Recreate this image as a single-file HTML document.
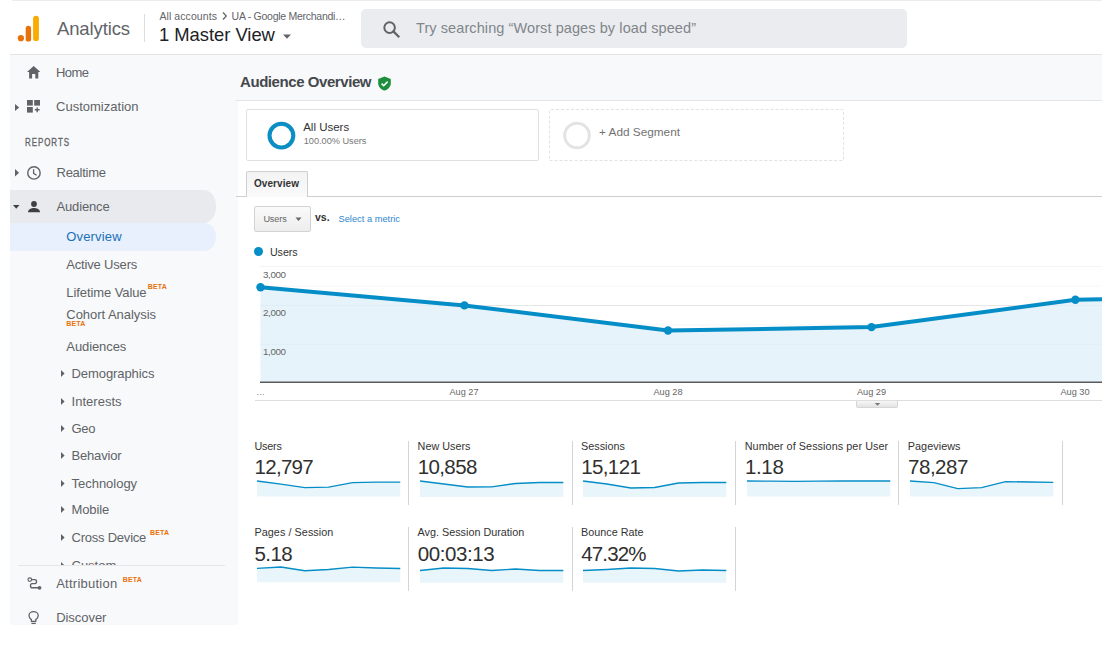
<!DOCTYPE html>
<html><head><meta charset="utf-8"><style>
html,body{margin:0;padding:0;width:1114px;height:650px;overflow:hidden;background:#fff;}
body{position:relative;font-family:"Liberation Sans",sans-serif;}
.r{position:absolute;box-sizing:border-box;}
.t{position:absolute;white-space:nowrap;line-height:1;font-family:"Liberation Sans",sans-serif;}
svg.r{overflow:visible;}
</style></head><body>
<div class="r" style="left:12px;top:0;width:1090px;height:1px;background:#ececec"></div>
<svg class="r" style="left:0;top:0" width="60" height="54" viewBox="0 0 60 54"><circle cx="20.9" cy="38.2" r="3.1" fill="#e8710a"/><rect x="25.7" y="25.8" width="5.4" height="15.8" rx="2.7" fill="#e8710a"/><rect x="33.1" y="15.8" width="5.8" height="25.3" rx="2.9" fill="#f9ab00"/></svg>
<div class="t" style="left:57.00px;top:20.00px;font-size:18.5px;color:#5f6368;letter-spacing:-0.127px;">Analytics</div>
<div class="r" style="left:144px;top:14px;width:1px;height:28px;background:#dadce0"></div>
<div class="t" style="left:159.40px;top:11.00px;font-size:10.5px;color:#5f6368;letter-spacing:0.089px;">All accounts</div>
<svg class="r" style="left:220px;top:10px" width="10" height="12" viewBox="0 0 10 12"><path d="M3 2.5 L6.3 6 L3 9.5" fill="none" stroke="#5f6368" stroke-width="1.2"/></svg>
<div class="t" style="left:231.60px;top:11.00px;font-size:10.5px;color:#5f6368;letter-spacing:-0.268px;">UA - Google Merchandi…</div>
<div class="t" style="left:159.00px;top:26.00px;font-size:18.4px;color:#202124;letter-spacing:-0.024px;">1 Master View</div>
<svg class="r" style="left:281px;top:33px" width="12" height="8" viewBox="0 0 12 8"><path d="M2 1.5 L10 1.5 L6 5.8 Z" fill="#5f6368"/></svg>
<div class="r" style="left:361px;top:9px;width:546px;height:39px;background:#ebecef;border-radius:5px"></div>
<svg class="r" style="left:380px;top:18px" width="22" height="22" viewBox="0 0 22 22"><circle cx="9.6" cy="9.6" r="5.3" fill="none" stroke="#5f6368" stroke-width="2"/><path d="M13.4 13.4 L18.5 18.5" stroke="#5f6368" stroke-width="2.2" stroke-linecap="square"/></svg>
<div class="t" style="left:416.00px;top:21.00px;font-size:14.5px;color:#80868b;letter-spacing:0.089px;">Try searching “Worst pages by load speed”</div>
<div class="r" style="left:10px;top:54px;width:1092px;height:1px;background:#e3e3e3"></div>
<div class="r" style="left:10px;top:55px;width:228px;height:570px;background:#f8f9fa;overflow:hidden">
<div class="r" style="left:0;top:135px;width:206px;height:33px;background:#e8eaed;border-radius:0 12px 12px 0 / 0 16px 16px 0"></div><div class="r" style="left:0;top:168px;width:206.3px;height:28px;background:#e7f0fc;border-radius:0 12px 12px 0 / 0 14px 14px 0"></div><div class="t" style="left:46.00px;top:11.00px;font-size:13px;color:#5f6368;letter-spacing:-0.561px;">Home</div><div class="t" style="left:46.00px;top:45.00px;font-size:13px;color:#5f6368;letter-spacing:0.011px;">Customization</div><div class="t" style="left:15.40px;top:83.00px;font-size:10px;color:#5f6368;letter-spacing:1.200px;-webkit-text-stroke:0.3px #5f6368;transform:scaleX(0.7948);transform-origin:0 0;">REPORTS</div><div class="t" style="left:46.50px;top:111.00px;font-size:13px;color:#5f6368;letter-spacing:-0.257px;">Realtime</div><div class="t" style="left:46.50px;top:145.00px;font-size:13px;color:#5f6368;letter-spacing:-0.144px;">Audience</div><div class="t" style="left:56.30px;top:175.00px;font-size:13px;color:#1a6fb8;letter-spacing:0.156px;">Overview</div><div class="t" style="left:56.30px;top:203.00px;font-size:13px;color:#5f6368;letter-spacing:-0.178px;">Active Users</div><div class="t" style="left:56.30px;top:231.00px;font-size:13px;color:#5f6368;letter-spacing:-0.086px;">Lifetime Value</div><div class="t" style="left:137.70px;top:228.00px;font-size:7px;color:#e8710a;font-weight:bold;letter-spacing:0.155px;">BETA</div><div class="t" style="left:56.30px;top:253.00px;font-size:13px;color:#5f6368;letter-spacing:-0.045px;">Cohort Analysis</div><div class="t" style="left:56.30px;top:265.00px;font-size:7px;color:#e8710a;font-weight:bold;letter-spacing:0.155px;">BETA</div><div class="t" style="left:56.30px;top:285.00px;font-size:13px;color:#5f6368;letter-spacing:-0.089px;">Audiences</div><div class="t" style="left:61.50px;top:312.00px;font-size:13px;color:#5f6368;letter-spacing:-0.074px;">Demographics</div><svg class="r" style="left:51px;top:315.0px" width="4" height="7" viewBox="0 0 4 7"><path d="M0 0 L3.6 3.5 L0 7 Z" fill="#5f6368"/></svg><div class="t" style="left:61.50px;top:340.00px;font-size:13px;color:#5f6368;letter-spacing:0.031px;">Interests</div><svg class="r" style="left:51px;top:342.9px" width="4" height="7" viewBox="0 0 4 7"><path d="M0 0 L3.6 3.5 L0 7 Z" fill="#5f6368"/></svg><div class="t" style="left:61.50px;top:367.00px;font-size:13px;color:#5f6368;letter-spacing:-0.285px;">Geo</div><svg class="r" style="left:51px;top:370.3px" width="4" height="7" viewBox="0 0 4 7"><path d="M0 0 L3.6 3.5 L0 7 Z" fill="#5f6368"/></svg><div class="t" style="left:61.50px;top:394.00px;font-size:13px;color:#5f6368;letter-spacing:-0.173px;">Behavior</div><svg class="r" style="left:51px;top:397.1px" width="4" height="7" viewBox="0 0 4 7"><path d="M0 0 L3.6 3.5 L0 7 Z" fill="#5f6368"/></svg><div class="t" style="left:61.50px;top:422.00px;font-size:13px;color:#5f6368;letter-spacing:-0.019px;">Technology</div><svg class="r" style="left:51px;top:425.0px" width="4" height="7" viewBox="0 0 4 7"><path d="M0 0 L3.6 3.5 L0 7 Z" fill="#5f6368"/></svg><div class="t" style="left:61.50px;top:448.00px;font-size:13px;color:#5f6368;letter-spacing:-0.100px;">Mobile</div><svg class="r" style="left:51px;top:451.4px" width="4" height="7" viewBox="0 0 4 7"><path d="M0 0 L3.6 3.5 L0 7 Z" fill="#5f6368"/></svg><div class="t" style="left:61.50px;top:476.00px;font-size:13px;color:#5f6368;letter-spacing:-0.227px;">Cross Device</div><svg class="r" style="left:51px;top:479.3px" width="4" height="7" viewBox="0 0 4 7"><path d="M0 0 L3.6 3.5 L0 7 Z" fill="#5f6368"/></svg><div class="t" style="left:61.50px;top:504.00px;font-size:13px;color:#5f6368;">Custom</div><svg class="r" style="left:51px;top:506.9px" width="4" height="7" viewBox="0 0 4 7"><path d="M0 0 L3.6 3.5 L0 7 Z" fill="#5f6368"/></svg><div class="t" style="left:140.00px;top:474.00px;font-size:7px;color:#e8710a;font-weight:bold;letter-spacing:0.155px;">BETA</div><div class="r" style="left:0;top:511px;width:228px;height:59px;background:#f8f9fa"></div><div class="r" style="left:8px;top:510px;width:207px;height:1px;background:#e6e6e6"></div><div class="t" style="left:46.20px;top:522.00px;font-size:13px;color:#5f6368;letter-spacing:0.247px;">Attribution</div><div class="t" style="left:112.70px;top:521.00px;font-size:7px;color:#e8710a;font-weight:bold;letter-spacing:0.155px;">BETA</div><div class="t" style="left:46.20px;top:556.00px;font-size:13px;color:#5f6368;letter-spacing:-0.053px;">Discover</div><svg class="r" style="left:5px;top:48.5px" width="5" height="8" viewBox="0 0 5 8"><path d="M0 0 L4.2 3.5 L0 7 Z" fill="#5f6368"/></svg><svg class="r" style="left:4.7px;top:114px" width="5" height="8" viewBox="0 0 5 8"><path d="M0 0 L4 3.8 L0 7.6 Z" fill="#5f6368"/></svg><svg class="r" style="left:3.2px;top:150px" width="7" height="5" viewBox="0 0 7 5"><path d="M0 0 L6.5 0 L3.25 3.8 Z" fill="#3c4043"/></svg><svg class="r" style="left:17px;top:10.8px" width="14" height="13" viewBox="0 0 14 13"><path d="M6.7 0 L13.4 6 L11.3 6 L11.3 12.4 L8.3 12.4 L8.3 8 L5.1 8 L5.1 12.4 L2.1 12.4 L2.1 6 L0 6 Z" fill="#5f6368"/></svg><svg class="r" style="left:17px;top:45px" width="14" height="13" viewBox="0 0 14 13"><rect x="0" y="0" width="5.8" height="5.6" fill="#5f6368"/><rect x="7.2" y="0" width="5.8" height="5.6" fill="#5f6368"/><rect x="0" y="7" width="5.8" height="5.6" fill="#5f6368"/><path d="M7.8 9.8 H12.6 M10.2 7.4 V12.2" stroke="#5f6368" stroke-width="1.4"/></svg><svg class="r" style="left:16.6px;top:110.7px" width="14" height="14" viewBox="0 0 14 14"><circle cx="6.95" cy="6.95" r="6.2" fill="none" stroke="#5f6368" stroke-width="1.4"/><path d="M6.6 3.3 V7.3 L9.6 9.2" fill="none" stroke="#5f6368" stroke-width="1.3"/></svg><svg class="r" style="left:17.8px;top:146.4px" width="12" height="12" viewBox="0 0 12 12"><circle cx="6" cy="3" r="2.9" fill="#3c4043"/><path d="M0 11.3 C0 8 3.5 7 6 7 C8.5 7 12 8 12 11.3 Z" fill="#3c4043"/></svg><svg class="r" style="left:16.5px;top:522px" width="16" height="14" viewBox="0 0 16 14"><circle cx="2.8" cy="2.6" r="1.8" fill="none" stroke="#5f6368" stroke-width="1.2"/><path d="M4.6 2.6 H8 C10 2.6 10 6.6 8 6.6 H5 C3 6.6 3 10.8 5 10.8 H11" fill="none" stroke="#5f6368" stroke-width="1.4"/><circle cx="12.5" cy="10.8" r="1.9" fill="#5f6368"/></svg><svg class="r" style="left:17.5px;top:555.5px" width="12" height="14" viewBox="0 0 12 14"><path d="M3.4 8.6 C1.9 7.6 1 6 1 4.5 C1 2.4 3 0.7 5.6 0.7 C8.2 0.7 10.2 2.4 10.2 4.5 C10.2 6 9.3 7.6 7.8 8.6 V10.4 H3.4 Z" fill="none" stroke="#5f6368" stroke-width="1.3"/><path d="M3.4 12.4 H7.8" stroke="#5f6368" stroke-width="1.3"/></svg>
</div>
<div class="r" style="left:238px;top:55px;width:864px;height:45px;background:#f8f9fa"></div>
<div class="r" style="left:236px;top:100px;width:866px;height:1px;background:#e3e3e3"></div>
<div class="t" style="left:240.00px;top:74.00px;font-size:15px;color:#44484c;font-weight:bold;letter-spacing:-0.432px;">Audience Overview</div>
<svg class="r" style="left:378px;top:75.5px" width="14" height="15" viewBox="0 0 14 15"><path d="M6.5 0.5 L12.8 3 V7 C12.8 10.8 10.2 13.6 6.5 14.6 C2.8 13.6 0.2 10.8 0.2 7 V3 Z" fill="#1e8e3e"/><path d="M3.6 7.6 L5.7 9.7 L9.6 5.6" fill="none" stroke="#fff" stroke-width="1.6"/></svg>
<div class="r" style="left:246px;top:109px;width:293px;height:52px;border:1px solid #e0e0e0;border-radius:2px;background:#fff"></div>
<svg class="r" style="left:266px;top:120px" width="31" height="31" viewBox="0 0 31 31"><circle cx="15.4" cy="15.6" r="11.9" fill="none" stroke="#0c8ec5" stroke-width="4.1"/></svg>
<div class="t" style="left:303.20px;top:122.00px;font-size:11.5px;color:#333333;letter-spacing:-0.001px;">All Users</div>
<div class="t" style="left:303.70px;top:137.00px;font-size:9.2px;color:#777777;letter-spacing:-0.008px;">100.00% Users</div>
<div class="r" style="left:549px;top:109px;width:295px;height:52px;border:1px dashed #e2e2e2;border-radius:2px"></div>
<svg class="r" style="left:562px;top:121px" width="30" height="30" viewBox="0 0 30 30"><circle cx="15" cy="14.5" r="12.3" fill="none" stroke="#e3e3e3" stroke-width="3"/></svg>
<div class="t" style="left:599.00px;top:127.00px;font-size:11.8px;color:#727272;letter-spacing:-0.002px;">+ Add Segment</div>
<div class="r" style="left:236px;top:196px;width:866px;height:1px;background:#cfcfcf"></div>
<div class="r" style="left:246px;top:171px;width:62px;height:26px;border:1px solid #cfcfcf;border-bottom:none;border-radius:2px 2px 0 0;background:linear-gradient(#f3f3f3,#fafafa)"></div>
<div class="t" style="left:254.00px;top:179.00px;font-size:10px;color:#333333;font-weight:bold;letter-spacing:0.073px;">Overview</div>
<div class="r" style="left:254px;top:206px;width:56.5px;height:26px;border:1px solid #d3d3d3;border-radius:2px;background:linear-gradient(#fafafa,#ededed)"></div>
<div class="t" style="left:263.40px;top:215.00px;font-size:9.2px;color:#666666;letter-spacing:-0.155px;">Users</div>
<svg class="r" style="left:295px;top:217px" width="8" height="5" viewBox="0 0 8 5"><path d="M0.5 0.5 L6.5 0.5 L3.5 3.9 Z" fill="#666"/></svg>
<div class="t" style="left:315.00px;top:212.00px;font-size:10.5px;color:#333333;font-weight:bold;">vs.</div>
<div class="t" style="left:338.50px;top:215.00px;font-size:9.3px;color:#2f87cf;">Select a metric</div>
<div class="r" style="left:254.2px;top:247.3px;width:9px;height:9px;border-radius:50%;background:#058dc7"></div>
<div class="t" style="left:269.90px;top:247.00px;font-size:10.7px;color:#333333;letter-spacing:-0.034px;">Users</div>
<svg class="r" style="left:238px;top:255px" width="864" height="160" viewBox="0 0 864 160"><rect x="22" y="11.00" width="842" height="1" fill="#f4f4f4"/><rect x="22" y="30.50" width="842" height="1" fill="#f7f7f7"/><rect x="22" y="50.00" width="842" height="1" fill="#ececec"/><rect x="22" y="69.50" width="842" height="1" fill="#f5f5f5"/><rect x="22" y="88.80" width="842" height="1" fill="#ececec"/><rect x="22" y="108.00" width="842" height="1" fill="#f5f5f5"/><polygon points="22.50,32.30 226.40,50.40 430.00,75.50 633.50,72.10 837.40,44.70 864.00,44.30 864.00,127.00 22.50,127.00" fill="#e6f3fa"/><rect x="22" y="50.00" width="842" height="1" fill="#000" fill-opacity="0.022"/><rect x="22" y="88.80" width="842" height="1" fill="#000" fill-opacity="0.022"/><rect x="22" y="126.50" width="842" height="1.5" fill="#5a5a5a"/><polyline points="22.50,32.30 226.40,50.40 430.00,75.50 633.50,72.10 837.40,44.70 864.00,44.30" fill="none" stroke="#058dc7" stroke-width="4" stroke-linejoin="round"/><circle cx="22.50" cy="32.30" r="4.2" fill="#058dc7"/><circle cx="226.40" cy="50.40" r="4.2" fill="#058dc7"/><circle cx="430.00" cy="75.50" r="4.2" fill="#058dc7"/><circle cx="633.50" cy="72.10" r="4.2" fill="#058dc7"/><circle cx="837.40" cy="44.70" r="4.2" fill="#058dc7"/><rect x="17" y="145" width="847" height="1" fill="#dedede"/></svg>
<div class="t" style="left:263.00px;top:270.00px;font-size:9.8px;color:#666666;letter-spacing:-0.380px;">3,000</div>
<div class="t" style="left:263.00px;top:308.00px;font-size:9.8px;color:#666666;letter-spacing:-0.380px;">2,000</div>
<div class="t" style="left:263.00px;top:347.00px;font-size:9.8px;color:#666666;letter-spacing:-0.380px;">1,000</div>
<div class="t" style="left:256.50px;top:388.00px;font-size:9.2px;color:#888888;letter-spacing:0.168px;">...</div>
<div class="t" style="left:449.40px;top:388.00px;font-size:9.2px;color:#666666;letter-spacing:0.009px;">Aug 27</div>
<div class="t" style="left:653.40px;top:388.00px;font-size:9.2px;color:#666666;letter-spacing:0.009px;">Aug 28</div>
<div class="t" style="left:856.90px;top:388.00px;font-size:9.2px;color:#666666;letter-spacing:0.009px;">Aug 29</div>
<div class="t" style="left:1060.40px;top:388.00px;font-size:9.2px;color:#666666;letter-spacing:0.009px;">Aug 30</div>
<div class="r" style="left:856px;top:400.5px;width:42px;height:7px;border:1px solid #d6d6d6;border-top:none;border-radius:0 0 2px 2px;background:linear-gradient(#f6f6f6,#e3e3e3)"></div>
<svg class="r" style="left:874px;top:402.5px" width="8" height="4" viewBox="0 0 8 4"><path d="M0.8 0 L6.2 0 L3.5 2.8 Z" fill="#777"/></svg>
<div class="t" style="left:254.40px;top:441.00px;font-size:10.8px;color:#333333;letter-spacing:-0.200px;">Users</div>
<div class="t" style="left:254.60px;top:457.00px;font-size:20.5px;color:#303030;letter-spacing:-0.722px;">12,797</div>
<svg class="r" style="left:256.60px;top:479.40px" width="143.30" height="17.60" viewBox="0 0 143.30 17.60"><polygon points="0.00,2.00 23.88,5.10 47.77,8.60 71.65,8.10 95.53,3.60 119.42,3.10 143.30,3.10 143.30,17.60 0,17.60" fill="#058dc7" fill-opacity="0.09"/><polyline points="0.00,2.00 23.88,5.10 47.77,8.60 71.65,8.10 95.53,3.60 119.42,3.10 143.30,3.10" fill="none" stroke="#058dc7" stroke-width="1.35"/></svg>
<div class="t" style="left:417.60px;top:441.00px;font-size:10.8px;color:#333333;">New Users</div>
<div class="t" style="left:417.80px;top:457.00px;font-size:20.5px;color:#303030;letter-spacing:-0.642px;">10,858</div>
<svg class="r" style="left:419.80px;top:479.00px" width="143.30" height="18.00" viewBox="0 0 143.30 18.00"><polygon points="0.00,2.00 23.88,5.00 47.77,8.00 71.65,7.80 95.53,4.50 119.42,3.50 143.30,3.50 143.30,18.00 0,18.00" fill="#058dc7" fill-opacity="0.09"/><polyline points="0.00,2.00 23.88,5.00 47.77,8.00 71.65,7.80 95.53,4.50 119.42,3.50 143.30,3.50" fill="none" stroke="#058dc7" stroke-width="1.35"/></svg>
<div class="t" style="left:581.10px;top:441.00px;font-size:10.8px;color:#333333;">Sessions</div>
<div class="t" style="left:581.30px;top:457.00px;font-size:20.5px;color:#303030;letter-spacing:-0.642px;">15,121</div>
<svg class="r" style="left:583.30px;top:479.00px" width="143.30" height="18.00" viewBox="0 0 143.30 18.00"><polygon points="0.00,2.00 23.88,5.00 47.77,9.00 71.65,8.50 95.53,4.00 119.42,3.50 143.30,3.50 143.30,18.00 0,18.00" fill="#058dc7" fill-opacity="0.09"/><polyline points="0.00,2.00 23.88,5.00 47.77,9.00 71.65,8.50 95.53,4.00 119.42,3.50 143.30,3.50" fill="none" stroke="#058dc7" stroke-width="1.35"/></svg>
<div class="t" style="left:744.70px;top:441.00px;font-size:10.8px;color:#333333;letter-spacing:0.071px;">Number of Sessions per User</div>
<div class="t" style="left:744.90px;top:457.00px;font-size:20.5px;color:#303030;letter-spacing:-0.331px;">1.18</div>
<svg class="r" style="left:746.90px;top:479.40px" width="143.30" height="17.60" viewBox="0 0 143.30 17.60"><polygon points="0.00,2.00 23.88,2.10 47.77,2.40 71.65,2.20 95.53,2.00 119.42,2.00 143.30,2.00 143.30,17.60 0,17.60" fill="#058dc7" fill-opacity="0.09"/><polyline points="0.00,2.00 23.88,2.10 47.77,2.40 71.65,2.20 95.53,2.00 119.42,2.00 143.30,2.00" fill="none" stroke="#058dc7" stroke-width="1.35"/></svg>
<div class="t" style="left:907.80px;top:441.00px;font-size:10.8px;color:#333333;letter-spacing:0.059px;">Pageviews</div>
<div class="t" style="left:908.00px;top:457.00px;font-size:20.5px;color:#303030;letter-spacing:-0.462px;">78,287</div>
<svg class="r" style="left:910.00px;top:479.40px" width="143.30" height="17.60" viewBox="0 0 143.30 17.60"><polygon points="0.00,2.00 23.88,3.60 47.77,9.60 71.65,8.60 95.53,2.60 119.42,3.00 143.30,3.40 143.30,17.60 0,17.60" fill="#058dc7" fill-opacity="0.09"/><polyline points="0.00,2.00 23.88,3.60 47.77,9.60 71.65,8.60 95.53,2.60 119.42,3.00 143.30,3.40" fill="none" stroke="#058dc7" stroke-width="1.35"/></svg>
<div class="t" style="left:254.40px;top:527.00px;font-size:10.8px;color:#333333;letter-spacing:0.068px;">Pages / Session</div>
<div class="t" style="left:254.60px;top:544.00px;font-size:20.5px;color:#303030;letter-spacing:-0.631px;">5.18</div>
<svg class="r" style="left:256.60px;top:565.00px" width="143.30" height="17.30" viewBox="0 0 143.30 17.30"><polygon points="0.00,3.30 23.88,2.00 47.77,5.70 71.65,4.50 95.53,2.20 119.42,3.00 143.30,3.50 143.30,17.30 0,17.30" fill="#058dc7" fill-opacity="0.09"/><polyline points="0.00,3.30 23.88,2.00 47.77,5.70 71.65,4.50 95.53,2.20 119.42,3.00 143.30,3.50" fill="none" stroke="#058dc7" stroke-width="1.35"/></svg>
<div class="t" style="left:417.60px;top:527.00px;font-size:10.8px;color:#333333;">Avg. Session Duration</div>
<div class="t" style="left:417.80px;top:544.00px;font-size:20.5px;color:#303030;letter-spacing:-0.430px;">00:03:13</div>
<svg class="r" style="left:419.80px;top:565.50px" width="143.30" height="16.80" viewBox="0 0 143.30 16.80"><polygon points="0.00,4.50 23.88,2.00 47.77,2.50 71.65,4.50 95.53,3.00 119.42,4.50 143.30,4.50 143.30,16.80 0,16.80" fill="#058dc7" fill-opacity="0.09"/><polyline points="0.00,4.50 23.88,2.00 47.77,2.50 71.65,4.50 95.53,3.00 119.42,4.50 143.30,4.50" fill="none" stroke="#058dc7" stroke-width="1.35"/></svg>
<div class="t" style="left:581.10px;top:527.00px;font-size:10.8px;color:#333333;">Bounce Rate</div>
<div class="t" style="left:581.30px;top:544.00px;font-size:20.5px;color:#303030;letter-spacing:-0.887px;">47.32%</div>
<svg class="r" style="left:583.30px;top:565.50px" width="143.30" height="16.80" viewBox="0 0 143.30 16.80"><polygon points="0.00,4.50 23.88,3.50 47.77,2.00 71.65,2.50 95.53,5.00 119.42,4.00 143.30,4.50 143.30,16.80 0,16.80" fill="#058dc7" fill-opacity="0.09"/><polyline points="0.00,4.50 23.88,3.50 47.77,2.00 71.65,2.50 95.53,5.00 119.42,4.00 143.30,4.50" fill="none" stroke="#058dc7" stroke-width="1.35"/></svg>
<div class="r" style="left:408.00px;top:440.5px;width:1px;height:64px;background:#d4d4d4"></div>
<div class="r" style="left:571.50px;top:440.5px;width:1px;height:64px;background:#d4d4d4"></div>
<div class="r" style="left:735.10px;top:440.5px;width:1px;height:64px;background:#d4d4d4"></div>
<div class="r" style="left:898.20px;top:440.5px;width:1px;height:64px;background:#d4d4d4"></div>
<div class="r" style="left:1061.50px;top:440.5px;width:1px;height:64px;background:#d4d4d4"></div>
<div class="r" style="left:408.00px;top:527px;width:1px;height:63.5px;background:#d4d4d4"></div>
<div class="r" style="left:571.50px;top:527px;width:1px;height:63.5px;background:#d4d4d4"></div>
<div class="r" style="left:735.10px;top:527px;width:1px;height:63.5px;background:#d4d4d4"></div>
</body></html>
